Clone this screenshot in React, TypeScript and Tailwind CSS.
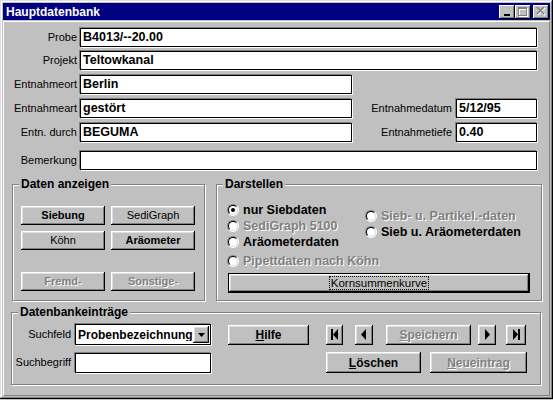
import React from 'react';

const raised =
  'bg-[#c0c0c0] shadow-[inset_-1px_-1px_0_#000,inset_1px_1px_0_#fff,inset_-2px_-2px_0_#808080,inset_2px_2px_0_#dfdfdf]';
const field = 'bg-white border border-black shadow-[-1px_-1px_0_#808080,1px_1px_0_#fff]';
const grayed = 'text-[#808080] [text-shadow:1px_1px_0_#fff]';

function Field({ value, w }: { value?: string; w: string }) {
  return (
    <div className={`${field} ${w} h-[19px] flex items-center pl-[2px] text-[12.5px] font-bold leading-none text-black`}>
      {value}
    </div>
  );
}

function Label({ text, w }: { text: string; w: string }) {
  return <span className={`${w} text-right pr-[3px] text-[11px] leading-none text-black`}>{text}</span>;
}

function Btn({
  children,
  w,
  h = 'h-[19px]',
  bold = true,
  disabled = false,
}: {
  children: React.ReactNode;
  w: string;
  h?: string;
  bold?: boolean;
  disabled?: boolean;
}) {
  return (
    <div
      className={`${raised} ${w} ${h} flex items-center justify-center text-[11px] leading-none ${
        bold ? 'font-bold' : 'font-normal'
      } ${disabled ? grayed : 'text-black'}`}
    >
      {children}
    </div>
  );
}

function Radio({ label, checked = false, disabled = false }: { label: string; checked?: boolean; disabled?: boolean }) {
  return (
    <div className="flex items-center h-[16px] whitespace-nowrap">
      <span className="shrink-0 w-[12px] h-[12px] rounded-full border border-t-[#808080] border-l-[#808080] border-r-white border-b-white flex items-center justify-center">
        <span className="w-[10px] h-[10px] rounded-full bg-white border border-t-black border-l-black border-r-[#dfdfdf] border-b-[#dfdfdf] flex items-center justify-center">
          {checked && <span className="w-[4px] h-[4px] rounded-full bg-black" />}
        </span>
      </span>
      <span className={`ml-[4px] text-[12.5px] font-bold leading-none ${disabled ? grayed : 'text-black'}`}>{label}</span>
    </div>
  );
}

function Group({ title, w, h, children }: { title: string; w: string; h: string; children: React.ReactNode }) {
  return (
    <div className={`relative ${w} ${h} border border-[#808080] shadow-[inset_1px_1px_0_#fff,1px_1px_0_#fff]`}>
      <span className="absolute -top-[8px] left-[6px] px-[2px] bg-[#c0c0c0] text-[12px] font-bold leading-[14px] text-black">
        {title}
      </span>
      {children}
    </div>
  );
}

function NavIcon({ kind }: { kind: 'first' | 'prev' | 'next' | 'last' }) {
  return (
    <svg width="10" height="11" viewBox="0 0 10 11" fill="#000">
      {kind === 'first' && (
        <>
          <rect x="1" y="0" width="2" height="11" />
          <polygon points="8,0 3,5.5 8,11" />
        </>
      )}
      {kind === 'prev' && <polygon points="7,0 2,5.5 7,11" />}
      {kind === 'next' && <polygon points="3,0 8,5.5 3,11" />}
      {kind === 'last' && (
        <>
          <polygon points="2,0 7,5.5 2,11" />
          <rect x="7" y="0" width="2" height="11" />
        </>
      )}
    </svg>
  );
}

function TitleButtons() {
  const small =
    'w-[16px] h-[14px] bg-[#c0c0c0] shadow-[inset_-1px_-1px_0_#000,inset_1px_1px_0_#fff,inset_-2px_-2px_0_#808080] flex items-center justify-center';
  return (
    <div className="flex items-center">
      <div className={small}>
        <svg width="8" height="8" viewBox="0 0 8 8">
          <rect x="1" y="6" width="6" height="2" fill="#000" />
        </svg>
      </div>
      <div className={small}>
        <svg width="10" height="10" viewBox="0 0 10 10">
          <rect x="1.5" y="1.5" width="8" height="8" fill="none" stroke="#fff" />
          <rect x="1" y="2" width="9" height="1" fill="#fff" />
          <rect x="0.5" y="0.5" width="8" height="8" fill="none" stroke="#808080" />
          <rect x="0" y="1" width="9" height="1" fill="#808080" />
        </svg>
      </div>
      <div className={`${small} ml-[2px]`}>
        <svg width="10" height="9" viewBox="0 0 10 9">
          <path d="M2 1 L9 8 M9 1 L2 8" stroke="#fff" strokeWidth="1.6" />
          <path d="M1 0 L8 7 M8 0 L1 7" stroke="#808080" strokeWidth="1.6" />
        </svg>
      </div>
    </div>
  );
}

export default function App() {
  return (
    <div className="w-[553px] h-[400px] bg-[#c0c0c0] font-['Liberation_Sans',Arial,sans-serif] select-none">
      <div className="w-[553px] h-[399px] p-[3px] flex flex-col bg-[#c0c0c0] shadow-[inset_-1px_-1px_0_#000,inset_1px_1px_0_#dfdfdf,inset_-2px_-2px_0_#808080,inset_2px_2px_0_#fff]">
        {/* title bar */}
        <div className="h-[17px] bg-[#000080] flex items-center justify-between pl-[3px] pr-[1px]">
          <span className="text-white text-[12px] font-bold leading-none">Hauptdatenbank</span>
          <TitleButtons />
        </div>

        {/* client */}
        <div className="flex-1 mt-[1px] border border-t-white border-l-white border-r-[#808080] border-b-[#808080] pt-[6px]">
          <div className="flex flex-col">
            <div className="flex items-center">
              <Label text="Probe" w="w-[76px]" />
              <Field value="B4013/--20.00" w="w-[457px]" />
            </div>
            <div className="flex items-center mt-[4px]">
              <Label text="Projekt" w="w-[76px]" />
              <Field value="Teltowkanal" w="w-[457px]" />
            </div>
            <div className="flex items-center mt-[5px]">
              <Label text="Entnahmeort" w="w-[76px]" />
              <Field value="Berlin" w="w-[272px]" />
            </div>
            <div className="flex items-center mt-[5px]">
              <Label text="Entnahmeart" w="w-[76px]" />
              <Field value="gestört" w="w-[272px]" />
              <span className="w-[104px] text-right pr-[4px] text-[11px] leading-none">Entnahmedatum</span>
              <Field value="5/12/95" w="w-[81px]" />
            </div>
            <div className="flex items-center mt-[5px]">
              <Label text="Entn. durch" w="w-[76px]" />
              <Field value="BEGUMA" w="w-[272px]" />
              <span className="w-[104px] text-right pr-[4px] text-[11px] leading-none">Entnahmetiefe</span>
              <Field value="0.40" w="w-[81px]" />
            </div>
            <div className="flex items-center mt-[9px]">
              <Label text="Bemerkung" w="w-[76px]" />
              <Field w="w-[457px]" />
            </div>
          </div>

          {/* middle groups */}
          <div className="flex mt-[14px] ml-[8px] gap-[11px]">
            <Group title="Daten anzeigen" w="w-[193px]" h="h-[117px]">
              <div className="pt-[21px] pl-[8px] grid grid-cols-[84px_84px] gap-x-[6px]">
                <Btn w="w-[84px]">Siebung</Btn>
                <Btn w="w-[84px]" bold={false}>
                  SediGraph
                </Btn>
                <div className="mt-[6px]">
                  <Btn w="w-[84px]" bold={false}>
                    Köhn
                  </Btn>
                </div>
                <div className="mt-[6px]">
                  <Btn w="w-[84px]">Aräometer</Btn>
                </div>
                <div className="mt-[22px]">
                  <Btn w="w-[84px]" disabled>
                    Fremd-
                  </Btn>
                </div>
                <div className="mt-[22px]">
                  <Btn w="w-[84px]" disabled>
                    Sonstige-
                  </Btn>
                </div>
              </div>
            </Group>

            <Group title="Darstellen" w="w-[326px]" h="h-[117px]">
              <div className="flex pt-[17px] pl-[10px]">
                <div className="w-[138px] flex flex-col">
                  <Radio label="nur Siebdaten" checked />
                  <Radio label="SediGraph 5100" disabled />
                  <Radio label="Aräometerdaten" />
                  <div className="mt-[3px]">
                    <Radio label="Pipettdaten nach Köhn" disabled />
                  </div>
                </div>
                <div className="flex flex-col pt-[6px]">
                  <Radio label="Sieb- u. Partikel.-daten" disabled />
                  <Radio label="Sieb u. Aräometerdaten" />
                </div>
              </div>
              <div className="mt-[4px] ml-[11px] w-[302px] h-[20px] border border-black">
                <div className={`${raised} w-full h-full flex items-center justify-center`}>
                  <span className="border border-dotted border-black px-[1px] text-[11.5px] leading-[12px] text-black">
                    Kornsummenkurve
                  </span>
                </div>
              </div>
            </Group>
          </div>

          {/* bottom group */}
          <div className="mt-[11px] ml-[7px]">
            <Group title="Datenbankeinträge" w="w-[530px]" h="h-[73px]">
              <div className="pt-[11px] flex flex-col">
                <div className="flex items-center">
                  <span className="w-[63px] text-right pr-[4px] text-[11px] leading-none">Suchfeld</span>
                  <div className={`${field} w-[136px] h-[21px] flex items-center justify-between pl-[2px] pr-[1px]`}>
                    <span className="text-[12px] font-bold leading-none text-black whitespace-nowrap overflow-hidden">
                      Probenbezeichnung
                    </span>
                    <div className={`${raised} w-[16px] h-[17px] shrink-0 flex items-center justify-center`}>
                      <svg width="7" height="4" viewBox="0 0 7 4">
                        <polygon points="0,0 7,0 3.5,4" fill="#000" />
                      </svg>
                    </div>
                  </div>
                  <div className="ml-[17px]">
                    <Btn w="w-[81px]" h="h-[20px]">
                      <span className="text-[12px]">
                        <span className="underline">H</span>ilfe
                      </span>
                    </Btn>
                  </div>
                  <div className="ml-[17px] flex items-center">
                    <Btn w="w-[17px]" h="h-[20px]">
                      <NavIcon kind="first" />
                    </Btn>
                    <div className="ml-[12px]">
                      <Btn w="w-[18px]" h="h-[20px]">
                        <NavIcon kind="prev" />
                      </Btn>
                    </div>
                    <div className="ml-[13px]">
                      <Btn w="w-[85px]" h="h-[20px]" disabled>
                        <span className="text-[12px]">
                          <span className="underline">S</span>peichern
                        </span>
                      </Btn>
                    </div>
                    <div className="ml-[7px]">
                      <Btn w="w-[18px]" h="h-[20px]">
                        <NavIcon kind="next" />
                      </Btn>
                    </div>
                    <div className="ml-[10px]">
                      <Btn w="w-[20px]" h="h-[20px]">
                        <NavIcon kind="last" />
                      </Btn>
                    </div>
                  </div>
                </div>
                <div className="flex items-center mt-[7px]">
                  <span className="w-[63px] text-right pr-[4px] text-[11px] leading-none">Suchbegriff</span>
                  <div className={`${field} w-[136px] h-[20px]`} />
                  <div className="ml-[115px] flex items-center">
                    <Btn w="w-[95px]" h="h-[21px]">
                      <span className="text-[12px]">
                        <span className="underline">L</span>öschen
                      </span>
                    </Btn>
                    <div className="ml-[9px]">
                      <Btn w="w-[97px]" h="h-[21px]" disabled>
                        <span className="text-[12px]">
                          <span className="underline">N</span>eueintrag
                        </span>
                      </Btn>
                    </div>
                  </div>
                </div>
              </div>
            </Group>
          </div>
        </div>
      </div>
    </div>
  );
}
